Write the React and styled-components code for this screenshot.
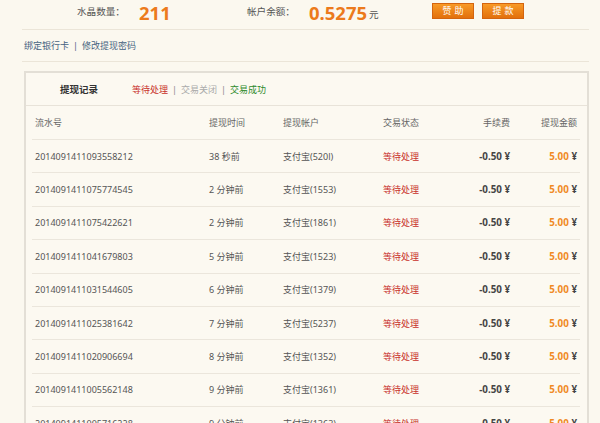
import React from 'react';
import styled, { createGlobalStyle } from 'styled-components';

const GlobalStyle = createGlobalStyle`
  html, body {
    margin: 0;
    padding: 0;
    overflow: hidden;
    background: #fbf8ef;
  }
  body {
    font-family: "Noto Sans", "Noto Sans CJK SC", sans-serif;
    font-size: 9px;
    color: #555;
  }
`;

const Page = styled.div`
  width: 600px;
  box-sizing: border-box;
  padding: 0 11px 0 22px;
`;

const TopBar = styled.div`
  display: flex;
  align-items: center;
  height: 24px;
  padding-left: 55px;
`;

const Stat = styled.div`
  display: flex;
  align-items: center;
  width: ${p => p.width}px;
`;

const StatLabel = styled.span`
  font-size: 9.6px;
  color: #555;
  width: 62px;
  margin-top: -2px;
`;

const StatValue = styled.span`
  font-size: 18.5px;
  font-weight: 700;
  color: #ec7a1c;
  line-height: 20px;
  margin-top: 2px;
`;

const Unit = styled.span`
  font-size: 9.6px;
  color: #555;
  margin-left: 2px;
  margin-top: 4px;
`;

const ButtonGroup = styled.div`
  display: flex;
  gap: 8px;
  margin-top: -2px;
`;

const OrangeButton = styled.button`
  width: 42px;
  height: 16px;
  padding: 0;
  border: 1px solid #d4640e;
  background: linear-gradient(#f89a26, #e2700c);
  color: #fff;
  font-family: inherit;
  font-size: 9px;
  letter-spacing: 3px;
  text-indent: 3px;
  line-height: 14px;
  cursor: pointer;
`;

const Divider = styled.div`
  border-top: 1px solid #ebe5d8;
  margin-top: ${p => p.top || 0}px;
`;

const LinksRow = styled.div`
  height: 31px;
  display: flex;
  align-items: center;
  padding-left: 2px;
  color: #46637f;
`;

const LinkSep = styled.span`
  margin: 0 4px;
  color: #46637f;
`;

const Panel = styled.div`
  margin: 9px 0 0 2px;
  border: 2px solid #e3dfd6;
  background: #fcf9f1;
`;

const Tabs = styled.div`
  height: 32px;
  display: flex;
  align-items: center;
  padding-left: 34px;
  border-bottom: 1px solid #e8e3d9;
`;

const TabTitle = styled.span`
  width: 72px;
  font-size: 9.5px;
  font-weight: 700;
  color: #333;
`;

const Tab = styled.span`
  color: ${p => p.color};
`;

const TabSep = styled.span`
  color: #888;
  margin: 0 4px;
`;

const Table = styled.div`
  margin: 0 7px 0 6px;
`;

const Row = styled.div`
  display: grid;
  grid-template-columns: 174px 74px 100px 70px 63px 67px;
  align-items: center;
  height: ${p => (p.head ? 34 : 33.4)}px;
  box-sizing: border-box;
  border-bottom: 1px solid #ebe6dc;
  color: ${p => (p.head ? '#666' : '#555')};
`;

const Cell = styled.div`
  padding: ${p => (p.right ? '0 3px 0 0' : '0 0 0 3px')};
  text-align: ${p => (p.right ? 'right' : 'left')};
  white-space: nowrap;
  color: ${p => p.color || 'inherit'};
  font-weight: ${p => (p.bold ? 700 : 400)};
  font-size: ${p => (p.bold ? '9.8px' : 'inherit')};
`;

const Amount = styled.span`
  color: #f08a24;
`;

const Yen = styled.span`
  color: #444;
`;

const rows = [
  ['2014091411093558212', '38 秒前', '支付宝(520l)'],
  ['2014091411075774545', '2 分钟前', '支付宝(1553)'],
  ['2014091411075422621', '2 分钟前', '支付宝(1861)'],
  ['2014091411041679803', '5 分钟前', '支付宝(1523)'],
  ['2014091411031544605', '6 分钟前', '支付宝(1379)'],
  ['2014091411025381642', '7 分钟前', '支付宝(5237)'],
  ['2014091411020906694', '8 分钟前', '支付宝(1352)'],
  ['2014091411005562148', '9 分钟前', '支付宝(1361)'],
  ['2014091411005716228', '9 分钟前', '支付宝(1363)'],
];

export default function App() {
  return (
    <Page>
      <GlobalStyle />
      <TopBar>
        <Stat width={170}>
          <StatLabel>水晶数量：</StatLabel>
          <StatValue>211</StatValue>
        </Stat>
        <Stat width={185}>
          <StatLabel>帐户余额：</StatLabel>
          <StatValue>0.5275</StatValue>
          <Unit>元</Unit>
        </Stat>
        <ButtonGroup>
          <OrangeButton>赞助</OrangeButton>
          <OrangeButton>提款</OrangeButton>
        </ButtonGroup>
      </TopBar>
      <Divider top={5} />
      <LinksRow>
        绑定银行卡<LinkSep>|</LinkSep>修改提现密码
      </LinksRow>
      <Divider />
      <Panel>
        <Tabs>
          <TabTitle>提现记录</TabTitle>
          <Tab color="#c8302a">等待处理</Tab>
          <TabSep>|</TabSep>
          <Tab color="#aaa">交易关闭</Tab>
          <TabSep>|</TabSep>
          <Tab color="#2e8a2c">交易成功</Tab>
        </Tabs>
        <Table>
          <Row head>
            <Cell>流水号</Cell>
            <Cell>提现时间</Cell>
            <Cell>提现帐户</Cell>
            <Cell>交易状态</Cell>
            <Cell right>手续费</Cell>
            <Cell right>提现金额</Cell>
          </Row>
          {rows.map(([id, time, account]) => (
            <Row key={id}>
              <Cell>{id}</Cell>
              <Cell>{time}</Cell>
              <Cell>{account}</Cell>
              <Cell color="#c8302a">等待处理</Cell>
              <Cell right bold color="#444">-0.50 ¥</Cell>
              <Cell right bold><Amount>5.00</Amount> <Yen>¥</Yen></Cell>
            </Row>
          ))}
        </Table>
      </Panel>
    </Page>
  );
}
